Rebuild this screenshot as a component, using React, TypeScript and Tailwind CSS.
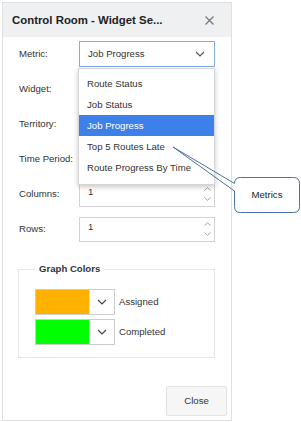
import React from "react";

const Chevron = ({ color = "#555", w = 10, h = 6 }: { color?: string; w?: number; h?: number }) => (
  <svg width={w} height={h} viewBox="0 0 10 6">
    <polyline points="1,1 5,5 9,1" fill="none" stroke={color} strokeWidth="1.2" />
  </svg>
);

const SpinUp = () => (
  <svg width="7" height="4" viewBox="0 0 7 4">
    <polyline points="0.5,3.5 3.5,0.7 6.5,3.5" fill="none" stroke="#9a9a9a" strokeWidth="0.9" />
  </svg>
);
const SpinDown = () => (
  <svg width="7" height="4" viewBox="0 0 7 4">
    <polyline points="0.5,0.5 3.5,3.3 6.5,0.5" fill="none" stroke="#9a9a9a" strokeWidth="0.9" />
  </svg>
);

const Label = ({ children }: { children: React.ReactNode }) => (
  <span className="w-[60px] shrink-0 text-[9.6px] leading-[12px] text-[#333]">{children}</span>
);

const PlainSelect = () => (
  <div className="w-[136px] h-[26px] border border-[#cfcfcf] bg-white flex items-center justify-end pr-[9px]">
    <Chevron />
  </div>
);

const NumberInput = ({ value }: { value: string }) => (
  <div className="w-[136px] h-[25px] border border-[#d2d2d2] bg-white flex">
    <span className="flex-1 pl-[8px] pt-[3px] text-[9.6px] leading-[12px] text-[#333]">{value}</span>
    <div className="w-[14px] flex flex-col items-center justify-around py-[2px]">
      <SpinUp />
      <SpinDown />
    </div>
  </div>
);

const items = ["Route Status", "Job Status", "Job Progress", "Top 5 Routes Late", "Route Progress By Time"];

const ColorRow = ({ color, label }: { color: string; label: string }) => (
  <div className="flex items-center h-[26px]">
    <div className="flex h-[26px] w-[80px] border border-[#cccccc] bg-white">
      <div className="w-[53px] h-full" style={{ backgroundColor: color }} />
      <div className="flex-1 flex items-center justify-center border-l border-[#e2e2e2]">
        <Chevron color="#444" />
      </div>
    </div>
    <span className="ml-[4px] text-[9.6px] leading-[12px] text-[#333]">{label}</span>
  </div>
);

export default function App() {
  return (
    <div className="relative w-[301px] h-[422px] bg-white font-['Liberation_Sans',Arial,sans-serif] overflow-hidden">
      <div className="ml-[2px] mt-[2px] w-[230px] h-[419px] border border-[#e0e0e0] flex flex-col bg-white">
        <div className="h-[34px] bg-[#eef0f2] flex items-center justify-between pl-[9px] pr-[17px]">
          <span className="text-[11.4px] font-bold text-[#222] leading-[14px]">Control Room - Widget Se...</span>
          <svg width="9" height="9" viewBox="0 0 9 9">
            <path d="M0.5 0.5 L8.5 8.5 M8.5 0.5 L0.5 8.5" stroke="#6f7a88" strokeWidth="1.2" />
          </svg>
        </div>
        <div className="flex-1 flex flex-col pt-[4px]">
          <div className="flex flex-col gap-[9px] pl-[16px]">
            <div className="flex items-center h-[26px]">
              <Label>Metric:</Label>
              <div className="relative w-[136px] h-[26px]">
                <div className="w-[136px] h-[26px] border border-[#86a9ee] bg-white flex items-center justify-between pl-[8px] pr-[9px]">
                  <span className="text-[9.6px] leading-[12px] text-[#333]">Job Progress</span>
                  <Chevron />
                </div>
                <div className="absolute z-10 left-[-1px] top-[27px] w-[137px] h-[117px] bg-white border border-[#d6d6d6] shadow-[0_2px_5px_rgba(0,0,0,0.22)] pt-[4px]">
                  {items.map((it) => (
                    <div
                      key={it}
                      className={
                        it === "Job Progress"
                          ? "h-[21px] flex items-center pl-[8px] bg-[#3d80e9] text-white text-[9.6px] leading-[12px]"
                          : "h-[21px] flex items-center pl-[8px] text-[#333] text-[9.6px] leading-[12px]"
                      }
                    >
                      {it}
                    </div>
                  ))}
                </div>
              </div>
            </div>
            <div className="flex items-center h-[26px]">
              <Label>Widget:</Label>
              <PlainSelect />
            </div>
            <div className="flex items-center h-[26px]">
              <Label>Territory:</Label>
              <PlainSelect />
            </div>
            <div className="flex items-center h-[26px]">
              <Label>Time Period:</Label>
              <PlainSelect />
            </div>
            <div className="flex items-center h-[26px]">
              <Label>Columns:</Label>
              <NumberInput value="1" />
            </div>
            <div className="flex items-center h-[26px]">
              <Label>Rows:</Label>
              <NumberInput value="1" />
            </div>
          </div>
          <fieldset className="ml-[15px] mt-[21px] w-[197px] border border-[#e6e6e6] pl-[16px] pr-[10px] pt-[14px] pb-[12px] flex flex-col gap-[4px]">
            <legend className="px-[4px] text-[9.6px] leading-[12px] font-bold text-[#333]">Graph Colors</legend>
            <ColorRow color="#ffb100" label="Assigned" />
            <ColorRow color="#00ff00" label="Completed" />
          </fieldset>
          <div className="mt-auto flex justify-end pr-[4px] pb-[4px]">
            <button className="w-[61px] h-[30px] bg-[#f6f6f6] border border-[#e3e3e3] rounded-[2px] text-[9.6px] text-[#333]">
              Close
            </button>
          </div>
        </div>
      </div>
      <svg className="absolute left-0 top-0 pointer-events-none z-20" width="301" height="422" viewBox="0 0 301 422">
        <path
          d="M234.5 191 V206.5 Q234.5 212.5 240.5 212.5 H293.5 Q299.5 212.5 299.5 206.5 V183.5 Q299.5 177.5 293.5 177.5 H240.5 Q234.5 177.5 234.5 183.5 V183 Z"
          fill="white"
          stroke="none"
        />
        <path
          d="M234.5 191 V206.5 Q234.5 212.5 240.5 212.5 H293.5 Q299.5 212.5 299.5 206.5 V183.5 Q299.5 177.5 293.5 177.5 H240.5 Q234.5 177.5 234.5 183.5 L173 147 L234.5 191"
          fill="none"
          stroke="#4a72a6"
          strokeWidth="1"
        />
        <text x="267" y="198" textAnchor="middle" fontSize="9.6" fill="#222" fontFamily="'Liberation Sans', Arial, sans-serif">
          Metrics
        </text>
      </svg>
    </div>
  );
}
